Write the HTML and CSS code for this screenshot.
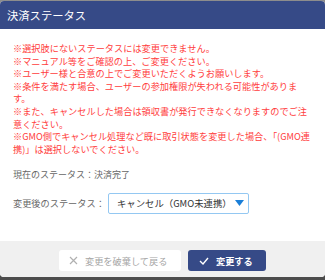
FILE: index.html
```html
<!DOCTYPE html>
<html lang="ja">
<head>
  <meta charset="UTF-8" />
  <meta name="viewport" content="width=device-width, initial-scale=1.0"/>
  <title>決済ステータス</title>
  <link rel="stylesheet" href="styles.css">
</head>
<body>
  <div class="modal">
    <div class="modal-header">決済ステータス</div>

    <div class="modal-body">
      <div class="notice">
        <p>※選択肢にないステータスには変更できません。</p>
        <p>※マニュアル等をご確認の上、ご変更ください。</p>
        <p>※ユーザー様と合意の上でご変更いただくようお願いします。</p>
        <p>※条件を満たす場合、ユーザーの参加権限が失われる可能性があります。</p>
        <p>※また、キャンセルした場合は領収書が発行できなくなりますのでご注意ください。</p>
        <p>※GMO側でキャンセル処理など既に取引状態を変更した場合、「(GMO連携)」は選択しないでください。</p>
      </div>

      <div class="current">現在のステータス：決済完了</div>

      <div class="change-row">
        <span class="change-label">変更後のステータス：</span>
        <div class="select-box">
          <span>キャンセル（GMO未連携）</span>
          <svg class="arrow" width="9" height="6" viewBox="0 0 9 6"><path d="M0 0h9L4.5 6z" fill="#1b7fd8"/></svg>
        </div>
      </div>
    </div>

    <div class="modal-footer">
      <button type="button" class="btn-cancel">
        <svg width="9" height="9" viewBox="0 0 9 9"><path d="M1 1l7 7M8 1L1 8" stroke="#b0b0b0" stroke-width="1.2" fill="none"/></svg>
        変更を破棄して戻る
      </button>
      <button type="button" class="btn-submit">
        <svg width="10" height="8" viewBox="0 0 10 8"><path d="M1 4l3 3 5-6" stroke="#fff" stroke-width="1.4" fill="none"/></svg>
        変更する
      </button>
    </div>
  </div>
</body>
</html>
```

FILE: styles.css
```css
body {
  margin: 0;
  padding: 1px 0 0;
  height: 280px;
  box-sizing: border-box;
  background: linear-gradient(#8d8d8d, #4c4c4c);
  font-family: "Noto Sans CJK JP", "Noto Sans", sans-serif;
}
.modal {
  height: 276px;
  display: flex;
  flex-direction: column;
  background: white;
  border-radius: 4px;
  overflow: hidden;
}
.modal-header {
  height: 28px;
  line-height: 28px;
  padding-left: 7px;
  background: #364a87;
  color: white;
  font-size: 11.3px;
}
.modal-body {
  flex: 1;
  padding: 13px 13px 0;
}
.notice {
  color: #ff3d3d;
  font-size: 9.2px;
  line-height: 12.6px;
}
.notice p {
  margin: 0;
}
.current {
  margin-top: 14px;
  color: #666;
  font-size: 9px;
  line-height: 12.6px;
}
.change-row {
  display: flex;
  align-items: center;
  gap: 3px;
  margin-top: 11px;
}
.change-label {
  color: #666;
  font-size: 9.2px;
}
.select-box {
  width: 141px;
  height: 21px;
  box-sizing: border-box;
  display: flex;
  align-items: center;
  justify-content: space-between;
  padding: 0 4px 0 8px;
  border: 1px solid #94c8f2;
  border-radius: 2px;
  color: #333;
  font-size: 9.4px;
}
.modal-footer {
  height: 36px;
  box-sizing: border-box;
  padding-top: 9px;
  display: flex;
  justify-content: center;
  gap: 7px;
  background: #f0f0f0;
}
.modal-footer button {
  height: 21px;
  display: flex;
  align-items: center;
  gap: 7px;
  border: none;
  border-radius: 3px;
  font-family: inherit;
  font-size: 9.2px;
  cursor: pointer;
}
.btn-cancel {
  width: 122px;
  padding-left: 10px;
  background: white;
  color: #a5a5a5;
}
.btn-submit {
  width: 78px;
  padding-left: 11px;
  background: #364a87;
  color: white;
  font-weight: bold;
}
```
